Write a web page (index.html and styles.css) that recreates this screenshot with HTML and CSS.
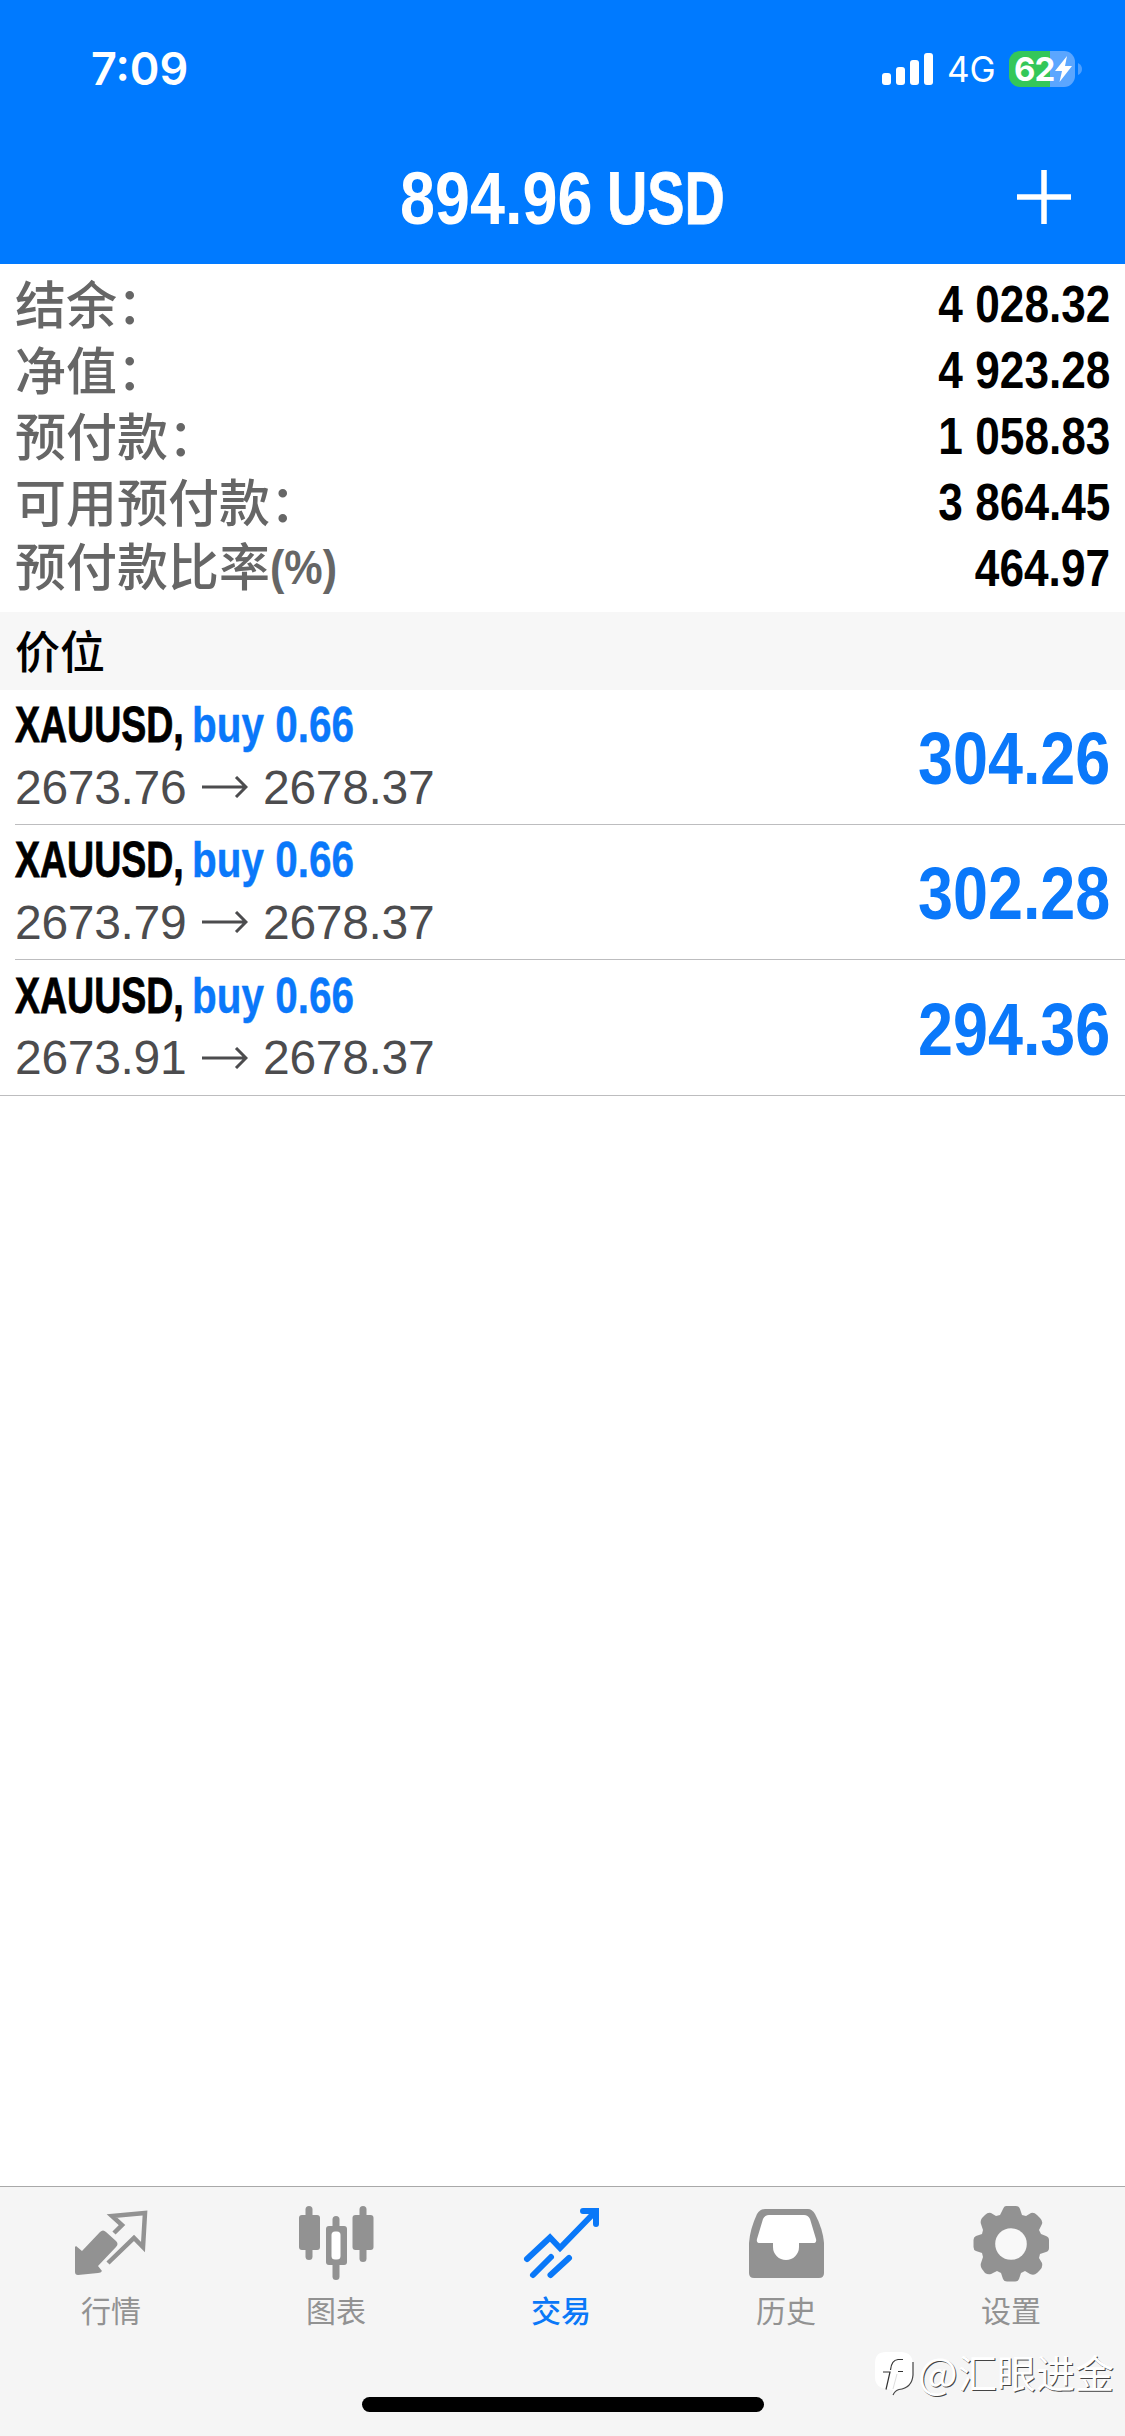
FILE: index.html
```html
<!DOCTYPE html>
<html lang="zh-CN">
<head>
<meta charset="utf-8">
<title>交易</title>
<link rel="stylesheet" href="styles.css">
</head>
<body>
<div class="app">
  <header class="header">
    <div class="status">
      <span class="clock">7:09</span>
      <div class="indicators">
        <svg class="signal" width="51" height="33" viewBox="0 0 51 33" fill="#fff"><rect x="0" y="20" width="9" height="12" rx="3"/><rect x="14" y="14" width="9" height="18" rx="3"/><rect x="28" y="7" width="9" height="25" rx="3"/><rect x="42" y="0" width="9" height="32" rx="3"/></svg>
        <span class="network">4G</span>
        <div class="battery">
          <span class="level">62</span>
          <svg class="bolt" width="17" height="26" viewBox="0 0 17 26"><path d="M12 0 0 15h7L4.500 26 17 10H10z" fill="#fff"/></svg>
        </div>
        <svg class="nub" width="4" height="12" viewBox="0 0 4 12"><path d="M0 0q4 2 4 6t-4 6z" fill="#4d9fff"/></svg>
      </div>
    </div>
    <div class="titlebar">
      <h1 class="title"><span class="amount">894.96</span> <span class="currency">USD</span></h1>
      <svg class="add" width="56" height="56" viewBox="0 0 56 56"><path d="M1 28H55M28 1V55" stroke="#fff" stroke-width="5.500"/></svg>
    </div>
  </header>

  <main class="content">
    <section class="summary">
      <div class="stat"><span class="label">结余：</span><span class="value">4 028.32</span></div>
      <div class="stat"><span class="label">净值：</span><span class="value">4 923.28</span></div>
      <div class="stat"><span class="label">预付款：</span><span class="value">1 058.83</span></div>
      <div class="stat"><span class="label">可用预付款：</span><span class="value">3 864.45</span></div>
      <div class="stat"><span class="label">预付款比率<span class="pct">(%)</span></span><span class="value">464.97</span></div>
    </section>
    <h2 class="section">价位</h2>
    <section class="positions">
      <article class="position">
        <div class="row">
          <div class="info">
            <div class="symbol"><span class="name">XAUUSD,</span><span class="side">buy 0.66</span></div>
            <div class="prices"><span class="price">2673.76</span><svg class="arrow" width="46" height="22" viewBox="0 0 46 22"><path d="M0 11H44M34 1 44 11 34 21"/></svg><span class="price">2678.37</span></div>
          </div>
          <span class="profit">304.26</span>
        </div>
      </article>
      <article class="position">
        <div class="row">
          <div class="info">
            <div class="symbol"><span class="name">XAUUSD,</span><span class="side">buy 0.66</span></div>
            <div class="prices"><span class="price">2673.79</span><svg class="arrow" width="46" height="22" viewBox="0 0 46 22"><path d="M0 11H44M34 1 44 11 34 21"/></svg><span class="price">2678.37</span></div>
          </div>
          <span class="profit">302.28</span>
        </div>
      </article>
      <article class="position">
        <div class="row">
          <div class="info">
            <div class="symbol"><span class="name">XAUUSD,</span><span class="side">buy 0.66</span></div>
            <div class="prices"><span class="price">2673.91</span><svg class="arrow" width="46" height="22" viewBox="0 0 46 22"><path d="M0 11H44M34 1 44 11 34 21"/></svg><span class="price">2678.37</span></div>
          </div>
          <span class="profit">294.36</span>
        </div>
      </article>
    </section>
  </main>

  <footer class="footer">
    <nav class="tabs">
      <a class="tab">
        <svg width="76" height="76" viewBox="0 0 76 76"><path d="M3 40 9 45 27 26Q30 23 33 26L43 35Q46 38 43 41L25 60 29 65Q28 67 25 67L5 69Q2 69 2 66V41Z" fill="#929292"/><path d="M41 27 49 19 39 10 72 7 70 41 61 32 35 57" fill="none" stroke="#929292" stroke-width="4.500"/></svg>
        <span>行情</span>
      </a>
      <a class="tab">
        <svg width="76" height="76" viewBox="0 0 76 76" fill="#929292"><rect x="7.500" y="0" width="7" height="54" rx="3.500"/><rect x="1" y="9" width="21" height="35" rx="3"/><rect x="61.500" y="0" width="7" height="56" rx="3.500"/><rect x="54.500" y="9" width="21" height="35" rx="3"/><rect x="34.500" y="10" width="7" height="64" rx="3.500"/><rect x="28" y="20" width="21" height="39" rx="3"/><rect x="33.500" y="25.500" width="9" height="28" rx="3.500" fill="#fff"/></svg>
        <span>图表</span>
      </a>
      <a class="tab active">
        <svg width="76" height="76" viewBox="0 0 76 76" fill="none" stroke="#0a78f8" stroke-width="6" stroke-linecap="round"><path d="M4 53 27 31.500 37 42 72 6"/><path d="M60 5H73V18" stroke-linejoin="miter"/><path d="M10 69 28 51M27.500 69 46 52"/></svg>
        <span>交易</span>
      </a>
      <a class="tab">
        <svg width="76" height="76" viewBox="0 0 76 76"><path d="M17 3H60Q64 3 67 8 75 23 76 37V67Q76 72 71 72H6Q1 72 1 67V37Q2 23 9 8 12 3 17 3Z" fill="#929292"/><path d="M21 9H56Q60 9 62 13L68 33Q69 37 65 37H51V41A13 13 0 0 1 25 41V37H12Q8 37 9 33L15 13Q17 9 21 9Z" fill="#fff"/></svg>
        <span>历史</span>
      </a>
      <a class="tab">
        <svg width="76" height="76" viewBox="0 0 76 76"><path d="M33 0H43Q46 0 47 3L49 9 53 10 58 7Q61 6 64 9L67 12Q70 15 69 18L66 24 68 28 73 30Q76 31 76 34V42Q76 45 73 46L67 48 66 52 69 57Q70 61 67 64L64 67Q61 70 57 68L52 65 48 67 46 73Q45 75.500 42 75.500H34Q31 75.500 30 73L28 67 24 65 18 68Q15 69 12 67L9 63Q7 60 8 57L10 51 9 47 3 45Q.5 44 .5 41V34Q.5 31 3 30L9 28 10 24 8 18Q7 15 9 12L12 9Q15 6 18 7L23 10 27 9 30 3Q31 0 33 0Z" fill="#929292"/><circle cx="38" cy="38" r="15.800" fill="#f8f8f8"/></svg>
        <span>设置</span>
      </a>
    </nav>
    <div class="home"></div>
    <div class="watermark">
      <svg width="42" height="46" viewBox="0 0 42 46"><path d="M11 0H27Q38 1 38 13V23Q37 36 22 38L17 43 18 38 12 37Q0 36 0 25V11Q0 0 11 0Z" fill="#fff"/><path d="M38 10V23Q37 36 24 37.500 20 38.500 18 43" fill="none" stroke="#444" stroke-width="1.200"/><path d="M28 7.500H23Q16.500 8 15.500 18M8 20H15L11 37.500M23 19.500H28" fill="none" stroke="#333" stroke-width="1.200"/><path d="M22 22 18 37" fill="none" stroke="#ddd" stroke-width="1"/></svg>
      <span class="handle"><span class="at">@</span>汇眼进金</span>
    </div>
  </footer>
</div>
</body>
</html>
```
FILE: styles.css
```css
* { box-sizing: border-box; }
body { margin: 0; background: #fff; font-family: "Liberation Sans", "Noto Sans CJK SC", sans-serif; }
svg { display: block; flex: none; }
.app { width: 1125px; height: 2436px; display: flex; flex-direction: column; overflow: hidden; }

.header { height: 264px; background: #007aff; color: #fff; display: flex; flex-direction: column; }
.status { height: 130px; padding: 8px 43px 0 91px; display: flex; justify-content: space-between; align-items: center; font-family: Inter, sans-serif; }
.clock { font-size: 45px; font-weight: 600; line-height: 50px; }
.indicators { display: flex; align-items: center; }
.network { width: 76px; padding-left: 14px; font-size: 35px; line-height: 36px; }
.battery { width: 66px; height: 36px; border-radius: 11px; background: linear-gradient(90deg, #34c759 0 41px, #5ba6ff 41px); display: flex; align-items: center; padding-left: 5px; }
.level { width: 41px; font-size: 33px; font-weight: 700; line-height: 36px; letter-spacing: -1px; }
.nub { margin-left: 3px; }
.titlebar { height: 134px; padding: 0 53px; display: grid; grid-template-columns: 56px 1fr 56px; align-items: center; }

/* condensed bold face: the bold sans narrowed horizontally */
.title, .value, .name, .side, .profit { font-family: "Liberation Sans", sans-serif; font-weight: 700; white-space: nowrap; }
.title { grid-column: 2; margin: 3px 0 0; display: flex; justify-content: center; font-size: 74px; line-height: 80px; }
.amount { width: 207px; transform: scaleX(.85); transform-origin: left; }
.currency { width: 118px; transform: scaleX(.755); transform-origin: left; -webkit-text-stroke: .8px #fff; }
.value { font-size: 52px; line-height: 66px; color: #000; transform: scaleX(.85); transform-origin: right; }
.profit { font-size: 74px; line-height: 80px; margin-top: 4px; transform: scaleX(.85); transform-origin: right; }
.name { width: 177px; color: #000; transform: scaleX(.75); transform-origin: left; -webkit-text-stroke: .8px #000; }
.side { transform: scaleX(.81); transform-origin: left; -webkit-text-stroke: .4px #0a78fa; }
.side, .profit { color: #0a78fa; }

.content { flex: 1; }
.summary { height: 348px; padding: 7px 15px 0 15px; }
.stat { height: 66px; display: flex; justify-content: space-between; align-items: center; }
.label { display: flex; margin-top: -5px; font-family: "Noto Sans CJK SC", sans-serif; font-weight: 500; font-size: 51px; line-height: 66px; color: #666; }
.pct { padding-top: 3px; font-family: "Liberation Sans", sans-serif; font-weight: 700; font-size: 49px; transform: scaleX(.88); transform-origin: left; }
.section { margin: 0; height: 78px; padding-left: 15px; background: #f7f7f7; font-family: "Noto Sans CJK SC", sans-serif; font-weight: 500; font-size: 45px; line-height: 75px; color: #000; }
.position { padding-left: 15px; }
.position:last-child { padding-left: 0; border-bottom: 1px solid #bdbdbf; }
.row { height: 135px; padding-right: 15px; border-bottom: 1px solid #bdbdbf; display: flex; justify-content: space-between; align-items: center; }
.position:last-child .row { padding-left: 15px; border: 0; }
.symbol { display: flex; height: 60px; font-size: 50px; line-height: 58px; }
.prices { display: flex; align-items: center; height: 62px; font-size: 48px; color: #4c4c4e; }
.price { width: 171px; letter-spacing: -.3px; }
.arrow { margin: 0 15px 0 16px; fill: none; stroke: #4c4c4e; stroke-width: 3; }

.footer { position: relative; height: 250px; border-top: 1px solid #a9a9a9; background: #f5f5f5; display: flex; flex-direction: column; align-items: center; }
.tabs { width: 1125px; height: 210px; margin-left: -3px; display: grid; grid-template-columns: repeat(5, 1fr); }
.tab { display: flex; flex-direction: column; align-items: center; padding-top: 19px; color: #929292; font-family: "Noto Sans CJK SC", sans-serif; font-size: 30px; line-height: 40px; }
.tab span { margin-top: 7px; }
.tab.active { color: #0a78f8; font-weight: 500; }
.home { width: 402px; height: 15px; border-radius: 8px; background: #000; }
.watermark { position: absolute; left: 875px; top: 165px; display: flex; align-items: center; gap: 1px; color: #fff; }
.handle { display: flex; align-items: center; height: 50px; margin-top: -8px; font-family: "Noto Sans CJK SC", sans-serif; font-weight: 400; font-size: 39px; line-height: 50px; text-shadow: 1px 1px 0 #444; }
.at { width: 40px; font-size: 42px; }
```
